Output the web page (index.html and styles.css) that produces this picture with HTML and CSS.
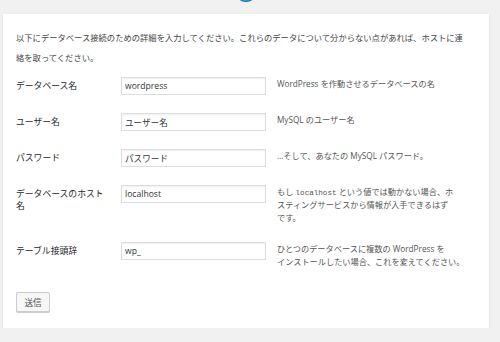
FILE: index.html
```html
<!DOCTYPE html>
<html lang="ja">
<head>
    <meta charset="UTF-8">
    <title>WordPress › 設定ファイルのセットアップ</title>
    <link rel="stylesheet" href="styles.css">
</head>
<body>
    <div class="wrap">
        <div class="logo">
            <svg width="40" height="40" viewBox="0 0 40 40">
                <circle cx="20" cy="20" r="11" fill="#0073aa"/>
                <circle cx="20" cy="20" r="9.5" fill="none" stroke="#4aa3d4" stroke-width="1"/>
            </svg>
        </div>

        <form class="card" method="post" action="setup-config.php?step=2">
            <p class="intro">以下にデータベース接続のための詳細を入力してください。これらのデータについて分からない点があれば、ホストに連絡を取ってください。</p>
            <table class="form-table">
                <tr>
                    <th>データベース名</th>
                    <td class="field"><input type="text" value="wordpress"></td>
                    <td class="desc">WordPress を作動させるデータベースの名</td>
                </tr>
                <tr>
                    <th>ユーザー名</th>
                    <td class="field"><input type="text" value="ユーザー名"></td>
                    <td class="desc">MySQL のユーザー名</td>
                </tr>
                <tr>
                    <th>パスワード</th>
                    <td class="field"><input type="text" value="パスワード"></td>
                    <td class="desc">…そして、あなたの MySQL パスワード。</td>
                </tr>
                <tr>
                    <th>データベースのホスト名</th>
                    <td class="field"><input type="text" value="localhost"></td>
                    <td class="desc">もし <code>localhost</code> という値では動かない場合、ホスティングサービスから情報が入手できるはず<span class="nobr">です。</span></td>
                </tr>
                <tr>
                    <th>テーブル接頭辞</th>
                    <td class="field"><input type="text" value="wp_"></td>
                    <td class="desc">ひとつのデータベースに複数の WordPress を<span class="nobr">インストールしたい場合、これを変えてください。</span></td>
                </tr>
            </table>
            <button type="submit" class="btn">送信</button>
        </form>
    </div>
</body>
</html>
```

FILE: styles.css
```css
body {
    margin: 0;
    padding: 0;
    background-color: #f1f1f1;
    color: #444;
    font-family: "Open Sans", "Noto Sans CJK JP", sans-serif;
}
.wrap {
    width: 486px;
    margin: 0 0 0 3px;
}
.logo {
    height: 14px;
    overflow: hidden;
}
.logo svg {
    display: block;
    margin: -29px auto 0;
}
.card {
    display: block;
    background: white;
    box-shadow: 0 1px 2px rgba(0,0,0,0.13);
    padding: 14px 13px 16px 13px;
}
.intro {
    margin: 0;
    padding-right: 5px;
    font-size: 8.3px;
    line-height: 20px;
    color: #444;
}
.form-table {
    width: 443px;
    table-layout: fixed;
    border-collapse: collapse;
    border-spacing: 0;
}
.form-table th {
    width: 92px;
    padding: 12px 13px 9px 0;
    text-align: left;
    vertical-align: top;
    font-weight: normal;
    font-size: 8.8px;
    line-height: 12px;
    color: #23282d;
}
.form-table td {
    padding: 9px 0;
    vertical-align: top;
}
.form-table .field {
    width: 145px;
    padding-right: 11px;
}
.form-table input {
    display: block;
    box-sizing: border-box;
    width: 145px;
    height: 18px;
    margin: 0;
    padding: 0 3px;
    border: 1px solid #ddd;
    box-shadow: inset 0 1px 2px rgba(0,0,0,0.07);
    background: white;
    color: #32373c;
    font-family: "Open Sans", "Noto Sans CJK JP", sans-serif;
    font-size: 8.6px;
    outline: none;
}
.form-table .desc {
    width: 182px;
    font-size: 8.2px;
    line-height: 13px;
    color: #555;
}
.desc code {
    font-family: "Liberation Mono", monospace;
    font-size: 7.6px;
    line-height: 1;
    color: #555;
}
.nobr {
    white-space: nowrap;
}
.btn {
    display: block;
    margin-top: 15px;
    width: 34px;
    height: 20px;
    padding: 0;
    border: 1px solid #ccc;
    border-radius: 2px;
    background: #f7f7f7;
    box-shadow: 0 1px 0 #ccc;
    color: #555;
    font-family: "Open Sans", "Noto Sans CJK JP", sans-serif;
    font-size: 8.6px;
}
```
